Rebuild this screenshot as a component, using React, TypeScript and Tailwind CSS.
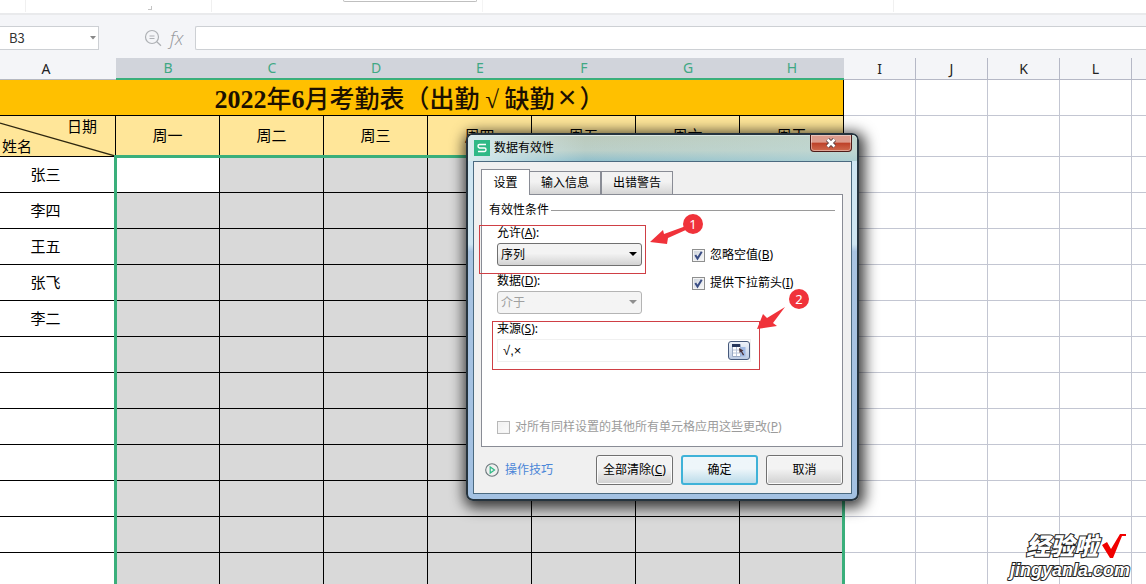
import React from "react";

const weekdays = ["周一", "周二", "周三", "周四", "周五", "周六", "周天"];
const markedColumns = ["B", "C", "D", "E", "F", "G", "H"];
const plainColumns = ["I", "J", "K", "L"];
const names = ["张三", "李四", "王五", "张飞", "李二", "", "", "", "", "", "", ""];

function FormulaBar() {
  return (
    <header className="flex-none bg-[#f4f5f8]">
      <div className="flex h-[15px] border-b-2 border-[#e9eaec] bg-white">
        <div className="h-3 w-[26px] border-r border-[#f0f0f0]" />
        <div className="flex h-[10px] w-[126px] items-end justify-end">
          <span className="h-1 w-1 border-r border-b border-[#c4c4c4]" />
        </div>
        <div className="h-3 w-[60px] border-r border-[#f0f0f0]" />
        <div className="ml-[131px] h-[2px] w-[134px] rounded-b border-x border-b border-[#bfbfbf]" />
        <div className="h-3 w-[6px] border-r border-[#f4f4f4]" />
        <div className="h-3 w-[411px] border-r border-[#f0f0f0]" />
      </div>
      <div className="flex h-[43px] items-start pt-[11px]">
        <label className="relative flex h-6 w-[99px] items-center border border-l-0 border-[#cdd0d4] bg-white">
          <input
            aria-label="名称框"
            defaultValue="B3"
            className="w-full bg-transparent pl-[9px] font-['Noto_Sans_CJK_SC',sans-serif] text-[13px] text-[#333] outline-none"
          />
          <svg viewBox="0 0 6 4" className="mr-[2px] h-1 w-[6px] flex-none">
            <path d="M0 0h6L3 3.500z" fill="#888" />
          </svg>
        </label>
        <div className="ml-[45px] flex h-6 w-[51px] items-center gap-2">
          <button aria-label="缩小" className="h-[18px] w-[18px]">
            <svg viewBox="0 0 18 18" fill="none" stroke="#adb0b4" strokeWidth="1.2" className="h-[18px] w-[18px]">
              <circle cx="8" cy="8" r="6.500" />
              <path d="M5.500 7h5M5.500 9.500h5M12.800 12.800l4.200 4" />
            </svg>
          </button>
          <button aria-label="插入函数" className="font-['Open_Sans',sans-serif] text-[18px] leading-5 font-light text-[#94979b] italic">
            fx
          </button>
        </div>
        <input aria-label="编辑栏" className="h-6 min-w-0 flex-1 rounded-l-[2px] border border-r-0 border-[#cdd0d4] bg-white px-2 text-sm outline-none" />
      </div>
    </header>
  );
}

function PlainCells() {
  return (
    <>
      {plainColumns.map((c) => (
        <td key={c} className="border-r border-b border-[#c3c6d2] bg-white p-0" />
      ))}
      <td className="border-b border-[#c3c6d2] bg-white p-0" />
    </>
  );
}

function Sheet() {
  return (
    <div className="relative">
      <table className="w-full table-fixed border-separate border-spacing-0 text-center text-[15px] leading-5 text-black">
        <colgroup>
          <col className="w-[116px]" />
          {markedColumns.map((c) => (
            <col key={c} className="w-[104px]" />
          ))}
          {plainColumns.map((c) => (
            <col key={c} className="w-[72px]" />
          ))}
          <col />
        </colgroup>
        <thead>
          <tr className="h-[22px] font-['Noto_Sans',sans-serif] text-[14px] text-[#222]">
            <th className="border-b border-[#b5b8c0] bg-[#f4f5f8] p-0 pr-6 font-normal">A</th>
            {markedColumns.map((c) => (
              <th key={c} className="border-b-2 border-[#3aaf7b] bg-[#d1d4db] p-0 font-normal text-[#3fa884]">
                {c}
              </th>
            ))}
            {plainColumns.map((c) => (
              <th key={c} className="border-r border-b border-[#b5b8c6] bg-[#f4f5f8] p-0 font-normal">
                {c}
              </th>
            ))}
            <th className="border-b border-[#b5b8c6] bg-[#f4f5f8] p-0" />
          </tr>
        </thead>
        <tbody>
          <tr className="h-9">
            <td colSpan={8} className="border-r border-b border-black bg-[#ffc000] p-0 pt-[3px] pr-6 text-[25px] leading-7 font-medium text-[#1c1000]">
              <span className="font-['Liberation_Serif',serif] text-[26px] font-bold">2022</span>年
              <span className="font-['Liberation_Serif',serif] text-[26px] font-bold">6</span>
              月考勤表（出勤<span className="inline-block w-[25px] font-['Liberation_Serif',serif] font-bold">√</span>缺勤
              <span className="inline-block w-[25px] font-['Liberation_Sans',sans-serif] text-[32px] leading-6 font-normal">×</span>）
            </td>
            <PlainCells />
          </tr>
          <tr className="h-[41px]">
            <td className="border-r border-b border-black bg-[#ffe699] p-0">
              <div className="relative h-10">
                <svg viewBox="0 0 115 40" preserveAspectRatio="none" className="absolute inset-0 h-full w-full">
                  <path d="M0 7L115 40" stroke="#2d260f" strokeWidth="1.300" />
                </svg>
                <div className="flex h-full flex-col justify-between pr-[18px] pb-px pl-[2px]">
                  <span className="text-right">日期</span>
                  <span className="text-left">姓名</span>
                </div>
              </div>
            </td>
            {weekdays.map((d) => (
              <td key={d} className="border-r border-b border-black bg-[#ffe699] p-0 pb-[2px]">
                {d}
              </td>
            ))}
            <PlainCells />
          </tr>
          {names.map((name, r) => (
            <tr key={r} className="h-9">
              <td className="border-r border-b border-black bg-white p-0 pr-6 pb-px">{name}</td>
              {markedColumns.map((c, i) => (
                <td key={c} className={"border-r border-b border-black p-0 " + (r === 0 && i === 0 ? "bg-white" : "bg-[#d9d9d9]")} />
              ))}
              <PlainCells />
            </tr>
          ))}
        </tbody>
      </table>
      <div className="pointer-events-none absolute top-[97px] bottom-0 left-[114px] w-[731px] border-[3px] border-b-0 border-[#3aaf7b]" />
    </div>
  );
}

const tabBase = "h-[23px] border border-b-0 border-[#898c95] bg-linear-to-b from-[#f2f2f2] from-45% to-[#d5d5d5] px-[11px]";

function Tick({ id, label, hotkey, checked, disabled }: { id: string; label: string; hotkey: string; checked?: boolean; disabled?: boolean }) {
  return (
    <div className="flex items-center gap-[5px]">
      <span className="relative h-[13px] w-[13px] flex-none">
        <input
          id={id}
          type="checkbox"
          defaultChecked={checked}
          disabled={disabled}
          className="peer block h-[13px] w-[13px] appearance-none border border-[#8e8f8f] bg-linear-to-br from-[#ccd2da] to-[#fbfbfb] shadow-[inset_0_0_0_1px_#f4f4f4] disabled:border-[#b8b8b8] disabled:from-[#f0f0f0]"
        />
        <svg viewBox="0 0 13 13" className="pointer-events-none absolute inset-0 hidden h-[13px] w-[13px] peer-checked:block">
          <path d="M3.300 6L5.500 9.500L9.700 2.800" fill="none" stroke="#3a4d84" strokeWidth="2" />
        </svg>
      </span>
      <label htmlFor={id} className={disabled ? "text-[#9b9b9b]" : "text-black"}>
        {label}(<u>{hotkey}</u>)
      </label>
    </div>
  );
}

function Combo({ id, label, hotkey, value, disabled }: { id: string; label: string; hotkey: string; value: string; disabled?: boolean }) {
  return (
    <div className="flex flex-col gap-[2px]">
      <label htmlFor={id}>
        {label}(<u>{hotkey}</u>):
      </label>
      <div className="relative w-[145px]">
        <select
          id={id}
          disabled={disabled}
          className="block h-[23px] w-full appearance-none rounded-[3px] border border-[#707070] bg-linear-to-b from-[#f3f3f3] from-45% to-[#d3d3d3] pl-[3px] disabled:border-[#b4b4b4] disabled:from-[#f4f4f4] disabled:to-[#f4f4f4] disabled:text-[#a0a0a0] disabled:opacity-100"
        >
          <option>{value}</option>
        </select>
        <svg viewBox="0 0 8 4" className="pointer-events-none absolute top-[9px] right-[5px] h-1 w-2">
          <path d="M0 0h8L4 4z" fill={disabled ? "#8f8f8f" : "#000"} />
        </svg>
      </div>
    </div>
  );
}

function Dialog() {
  const button = "h-[30px] w-[77px] rounded-[3px] border border-[#707070] bg-linear-to-b from-[#f3f3f3] from-45% to-[#d0d0d0] shadow-[inset_0_0_0_1px_#fbfbfb]";
  return (
    <section
      role="dialog"
      aria-labelledby="dialog-title"
      className="absolute top-[133px] left-[466px] w-[393px] rounded-[7px] border-2 border-[#26343e] bg-linear-to-b from-[#cfe6f2] from-30% via-[#a9c4e2] via-32% to-[#a3c1e2] px-[5px] pb-[5px] text-[12px] leading-4 text-black shadow-[2px_3px_14px_4px_rgba(0,0,0,0.75)]"
    >
      <div className="-mx-[5px] rounded-t-[5px] bg-linear-to-b from-[#bccabb] via-[#bbcfc8] via-60% to-[#8fbfcb] shadow-[inset_0_1px_0_#e2ece6]">
        <div className="flex h-[26px] items-start justify-between rounded-t-[5px] bg-linear-to-r from-[#d8ebee] via-[#d8ebee]/0 via-30% to-[#c3dcd8]/60 pr-[5px] pl-[6px]">
          <div className="flex items-center gap-1 pt-[5px]">
            <svg viewBox="0 0 16 16" className="h-4 w-4">
              <path d="M0 0h16v16H0z" fill="#2fb986" />
              <path d="M12 4.500H5.500Q4 4.500 4 6T5.500 8H10.500Q12 8 12 9.700T10.500 11.500H4" fill="none" stroke="#fff" strokeWidth="1.400" />
            </svg>
            <h2 id="dialog-title">数据有效性</h2>
          </div>
          <button
            aria-label="关闭"
            className="flex h-[17px] w-[42px] items-center justify-center rounded-b-[4px] border border-t-0 border-[#4f1c18] bg-linear-to-b from-[#dd9c8d] from-45% via-[#bd4028] via-50% to-[#cf6a4e] shadow-[inset_0_0_0_1px_rgba(255,255,255,0.4)]"
          >
            <svg viewBox="0 0 12 10" className="h-[10px] w-3">
              <path d="M2.500 1.500l7 7M9.500 1.500l-7 7" stroke="#5b4040" strokeWidth="4.400" />
              <path d="M2.500 1.500l7 7M9.500 1.500l-7 7" stroke="#fff" strokeWidth="2.600" />
            </svg>
          </button>
        </div>
      </div>
      <div className="border border-[#4b6a80] bg-[#f0f0f0] py-[7px] pr-2 pb-2 pl-[7px]">
        <div role="tablist" className="flex items-end">
          <button role="tab" aria-selected="true" className="relative z-10 -mb-px h-[26px] w-[49px] border border-b-0 border-[#898c95] bg-white">
            设置
          </button>
          <button role="tab" aria-selected="false" className={tabBase + " border-l-0"}>
            输入信息
          </button>
          <button role="tab" aria-selected="false" className={tabBase}>
            出错警告
          </button>
        </div>
        <div role="tabpanel" className="border border-[#898c95] bg-white px-[7px] pt-[7px] pb-[11px]">
          <div className="flex items-center gap-[2px]">
            <h3>有效性条件</h3>
            <span className="h-px flex-1 bg-[#9a9a9a]" />
          </div>
          <div className="flex flex-col pt-[7px] pl-2">
            <div className="flex gap-[50px]">
              <div className="flex flex-col gap-[7px]">
                <div className="relative">
                  <Combo id="allow" label="允许" hotkey="A" value="序列" />
                  <div className="pointer-events-none absolute top-0 -right-[4px] -bottom-2 -left-[18px] border border-[#cf3f45]" />
                </div>
                <Combo id="data" label="数据" hotkey="D" value="介于" disabled />
              </div>
              <div className="flex flex-col gap-3 pt-[22px]">
                <Tick id="ignore" label="忽略空值" hotkey="B" checked />
                <Tick id="arrow" label="提供下拉箭头" hotkey="I" checked />
              </div>
            </div>
            <div className="relative mt-[7px] mr-[84px] flex flex-col gap-[2px]">
              <label htmlFor="source">
                来源(<u>S</u>):
              </label>
              <div className="flex h-[23px] items-center border border-[#f0f0f0]">
                <input id="source" defaultValue="√,×" className="min-w-0 flex-1 pl-[5px] font-['Liberation_Sans',sans-serif] text-[13px] outline-none" />
                <button aria-label="选择区域" className="flex h-[19px] w-[22px] items-center justify-center rounded-[3px] border border-[#46597b] bg-linear-to-b from-[#eef3fa] to-[#bccbe3]">
                  <svg viewBox="0 0 14 13" className="h-[13px] w-[14px]">
                    <path d="M.5 .5h8v12h-8z" fill="#fff" stroke="#9aaac4" />
                    <path d="M8.500 3h5v9.500h-5z" fill="#9fb9e4" />
                    <path d="M0 0h8v3H0z" fill="#27375c" />
                    <path d="M1 6h7M1 9h7M4.500 3v9" stroke="#b8c4d8" />
                    <path d="M7 4l.6 5 1.300-1.200L11 11.500l1.200-.8L10 7.200 11.500 6.500z" fill="#4a3238" />
                  </svg>
                </button>
              </div>
              <div className="pointer-events-none absolute top-0 -right-[9px] -bottom-2 -left-[5px] border border-[#cf3f45]" />
            </div>
            <div className="mt-[57px]">
              <Tick id="all" label="对所有同样设置的其他所有单元格应用这些更改" hotkey="P" disabled />
            </div>
          </div>
        </div>
        <div className="flex items-center justify-between pt-2 pl-1">
          <a href="#tips" className="flex items-center gap-[6px] text-[#4a86d8]">
            <svg viewBox="0 0 14 14" fill="none" className="h-[14px] w-[14px]">
              <circle cx="7" cy="7" r="6.300" stroke="#69767a" strokeWidth="1.100" />
              <path d="M5.200 4v6L9.500 7z" stroke="#2fb986" strokeWidth="1.200" />
            </svg>
            操作技巧
          </a>
          <div className="flex gap-2">
            <button className={button}>
              全部清除(<u>C</u>)
            </button>
            <button className="h-[30px] w-[77px] rounded-[3px] border-2 border-[#3fb2d8] bg-linear-to-b from-[#eef6fa] from-45% to-[#bcdcea]">确定</button>
            <button className={button}>取消</button>
          </div>
        </div>
      </div>
      <svg viewBox="0 0 165 120" className="pointer-events-none absolute top-[75px] left-[180px] h-[120px] w-[165px]">
        <g fill="#f0323a">
          <path d="M2 32L15 20L16 24L38 16L40 19L20 28L19 34z" />
          <circle cx="45" cy="14" r="10" />
          <path d="M109 119L115 104L119 108L137 97L125 113L129 116z" />
          <circle cx="151" cy="89" r="10" />
        </g>
        <g fill="#fff" fontFamily="Noto Sans, sans-serif" fontSize="13" textAnchor="middle">
          <text x="45" y="19">1</text>
          <text x="151" y="94">2</text>
        </g>
      </svg>
    </section>
  );
}

function Watermark() {
  return (
    <div className="absolute right-4 bottom-1 flex flex-col items-end text-white [paint-order:stroke_fill] [-webkit-text-stroke:2px_#222]">
      <div className="flex items-center gap-1 pr-1 text-[24px] leading-7 font-black italic">
        经验啦
        <svg viewBox="0 0 24 24" className="h-6 w-6">
          <path d="M0 11l5-3 4 7L18 0h6v2h-4L11 24H8z" fill="#f00000" />
        </svg>
      </div>
      <div className="font-['Liberation_Sans',sans-serif] text-[18px] leading-5 font-bold italic">jingyanla.com</div>
    </div>
  );
}

export default function App() {
  return (
    <main className="relative flex h-screen flex-col overflow-hidden bg-white font-['Noto_Sans','Noto_Sans_CJK_SC',sans-serif]">
      <FormulaBar />
      <Sheet />
      <Dialog />
      <Watermark />
    </main>
  );
}
